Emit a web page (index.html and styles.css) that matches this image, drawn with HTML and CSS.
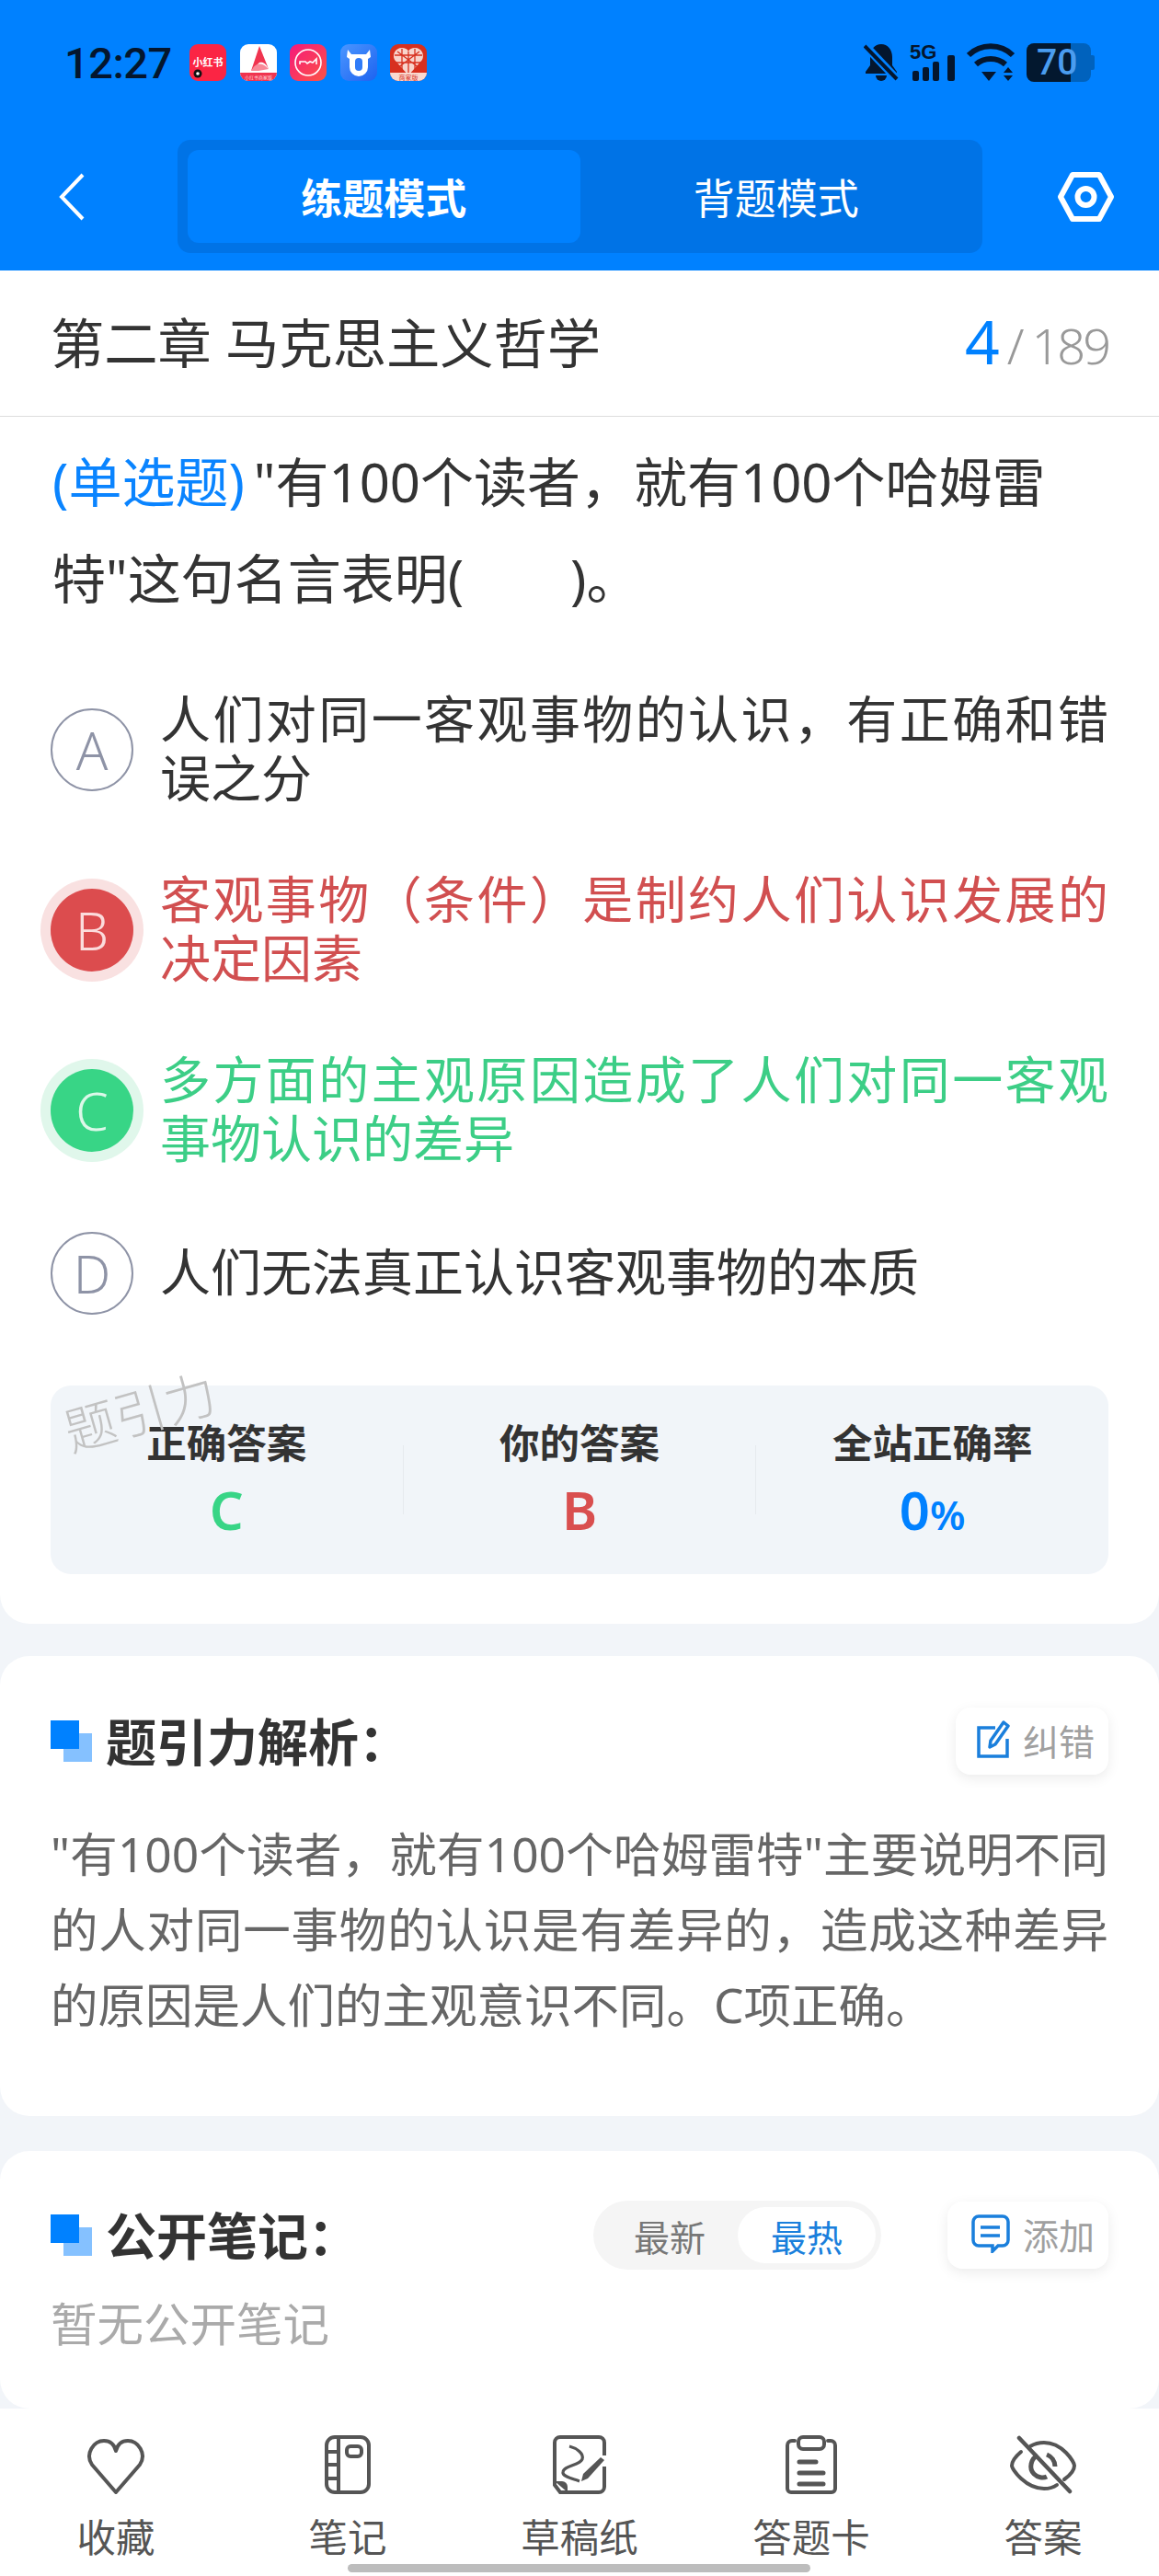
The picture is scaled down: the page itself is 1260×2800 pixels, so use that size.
FILE: index.html
```html
<!DOCTYPE html>
<html lang="zh-CN">
<head>
    <title>题引力</title>
    <meta charset="utf-8">
    <link rel="stylesheet" href="styles.css">
</head>
<body>

    <!-- Blue header -->
    <header class="top">
        <div class="status">
            <span class="time">12:27</span>
            <div class="apps">
                <svg class="app" viewBox="0 0 40 40"><rect width="40" height="40" rx="9" fill="#fb2544"/><text x="20" y="24" font-size="11" font-weight="700" fill="#fff" text-anchor="middle" font-family="Noto Sans CJK SC">小红书</text><circle cx="9" cy="32" r="4.5" fill="#111"/><circle cx="9" cy="32" r="1.8" fill="#fff"/></svg>
                <svg class="app" viewBox="0 0 40 40"><rect width="40" height="40" rx="9" fill="#fff"/><path d="M0 31h40a9 9 0 0 1-9 9H9a9 9 0 0 1-9-9z" fill="#f0344f"/><path d="M21 2l10 25c-3-6-6-8-10-7l-9 9z" fill="#f0344f"/><path d="M12 29c4-8 11-11 19-2l-11 2z" fill="#f88a98"/><text x="20" y="38" font-size="5" fill="#ffd9de" text-anchor="middle" font-family="Noto Sans CJK SC">小红书商家版</text></svg>
                <svg class="app" viewBox="0 0 40 40"><defs><linearGradient id="pink" x1="0" y1="0" x2="1" y2="1"><stop offset="0" stop-color="#f5197c"/><stop offset="1" stop-color="#fc5445"/></linearGradient></defs><rect width="40" height="40" rx="9" fill="url(#pink)"/><circle cx="20" cy="20" r="14" fill="none" stroke="#fff" stroke-width="1.6"/><path d="M11 22v-3h6l2 2 3-2 3 1 4-4v6" fill="none" stroke="#fff" stroke-width="1.6"/></svg>
                <svg class="app" viewBox="0 0 40 40"><defs><linearGradient id="azure" x1="0" y1="0" x2="1" y2="1"><stop offset="0" stop-color="#4b96ff"/><stop offset="1" stop-color="#1d63f0"/></linearGradient></defs><rect width="40" height="40" rx="9" fill="url(#azure)"/><path d="M8 6l4 5h16l4-5 1 8-3 2v9a10 10 0 0 1-20 0v-9l-3-2z" fill="#fff"/><rect x="16" y="15" width="8" height="14" rx="4" fill="#2f7bf8"/></svg>
                <svg class="app" viewBox="0 0 40 40"><rect width="40" height="40" rx="9" fill="#d7301f"/><path d="M20 34L5 17c-3-6 1-13 8-13 3 0 6 1 7 4 1-3 4-4 7-4 7 0 11 7 8 13z" fill="#f8d4cc"/><path d="M13 5v24M27 5v24M5 12h30M6 20h28M20 8v26M8 8l24 18M32 8L8 26" fill="none" stroke="#d7301f" stroke-width="1.3"/><path d="M0 31h40a9 9 0 0 1-9 9H9a9 9 0 0 1-9-9z" fill="#f9d9d0"/><text x="20" y="38.5" font-size="7" fill="#d7301f" text-anchor="middle" font-family="Noto Sans CJK SC">商家版</text></svg>
            </div>
            <div class="sys">
                <svg class="bell" viewBox="0 0 38 42"><path d="M19 1C12 1 7 7 7 15v9l-5 7v2h34v-2l-5-7v-9C31 7 26 1 19 1z" fill="#04162e"/><path d="M13 35h12a6 6 0 0 1-12 0z" fill="#04162e"/><path d="M2 3l34 36" stroke="#0081ff" stroke-width="9"/><path d="M1 3l35 36" stroke="#04162e" stroke-width="4"/></svg>
                <div class="signal">
                    <svg viewBox="0 0 50 42"><rect x="3" y="30" width="7" height="11" rx="2" fill="#04162e"/><rect x="14" y="26" width="7" height="15" rx="2" fill="#04162e"/><rect x="25" y="20" width="7" height="21" rx="2" fill="#04162e"/><rect x="41" y="13" width="8" height="28" rx="2" fill="#04162e"/></svg>
                    <span class="fiveg">5G</span>
                </div>
                <svg class="wifi" viewBox="0 0 53 42"><path d="M2 13C15 0 37 0 50 13" fill="none" stroke="#04162e" stroke-width="6"/><path d="M10 23c9-8 23-8 32 0" fill="none" stroke="#04162e" stroke-width="6"/><path d="M16 31h16l-8 10z" fill="#04162e"/><path d="M40 32h10l-5-6zM40 35h10l-5 6z" fill="#04162e"/></svg>
                <div class="battery">
                    <svg viewBox="0 0 74 42"><path d="M48 0h14a8 8 0 0 1 8 8v26a8 8 0 0 1-8 8H48z" fill="#0062bd"/><path d="M8 0h40v42H8a8 8 0 0 1-8-8V8a8 8 0 0 1 8-8z" fill="#03182f"/><path d="M70 13h2a2 2 0 0 1 2 2v12a2 2 0 0 1-2 2h-2z" fill="#0062bd"/></svg>
                    <span class="level">70</span>
                </div>
            </div>
        </div>
        <nav class="nav">
            <svg class="back" viewBox="0 0 28 52"><path d="M26 2L3 26l23 24" fill="none" stroke="#fff" stroke-width="4"/></svg>
            <div class="modes">
                <div class="mode mode-on">练题模式</div>
                <div class="mode">背题模式</div>
            </div>
            <svg class="gear" viewBox="0 0 61 54"><path d="M16 3h29l13 24-13 24H16L3 27z" fill="none" stroke="#fff" stroke-width="6" stroke-linejoin="round"/><circle cx="30.5" cy="27" r="9" fill="none" stroke="#fff" stroke-width="6"/></svg>
        </nav>
    </header>

    <!-- Question -->
    <section class="card card-question">
        <div class="chapter">
            <h1 class="chapter-name">第二章 马克思主义哲学</h1>
            <div class="count"><b>4</b><span>/</span><span class="total">189</span></div>
        </div>
        <p class="question"><span class="qtype">(单选题)</span>"有100个读者，就有100个哈姆雷特"这句名言表明(&emsp;&emsp;)。</p>
        <div class="options">
            <div class="option">
                <span class="letter">A</span>
                <p>人们对同一客观事物的认识，有正确和错误之分</p>
            </div>
            <div class="option option-wrong">
                <span class="letter">B</span>
                <p>客观事物（条件）是制约人们认识发展的决定因素</p>
            </div>
            <div class="option option-right">
                <span class="letter">C</span>
                <p>多方面的主观原因造成了人们对同一客观事物认识的差异</p>
            </div>
            <div class="option">
                <span class="letter">D</span>
                <p>人们无法真正认识客观事物的本质</p>
            </div>
        </div>
        <div class="stats">
            <span class="watermark">题引力</span>
            <div class="stat"><h3>正确答案</h3><div class="val val-right">C</div></div>
            <i class="sep"></i>
            <div class="stat"><h3>你的答案</h3><div class="val val-wrong">B</div></div>
            <i class="sep"></i>
            <div class="stat"><h3>全站正确率</h3><div class="val val-rate">0<small>%</small></div></div>
        </div>
    </section>

    <!-- Analysis -->
    <section class="card card-analysis">
        <div class="head">
            <i class="mark"></i>
            <h2>题引力解析：</h2>
            <div class="minibtn">
                <svg viewBox="0 0 36 41"><path d="M20 8H2v31h31V20" fill="none" stroke="#1a7fdc" stroke-width="3.5"/><path d="M29 2l5 4-14 20-6 3 1-7z" fill="none" stroke="#1a7fdc" stroke-width="3.5" stroke-linejoin="round"/></svg>
                <span>纠错</span>
            </div>
        </div>
        <p class="analysis">"有100个读者，就有100个哈姆雷特"主要说明不同的人对同一事物的认识是有差异的，造成这种差异的原因是人们的主观意识不同。C项正确。</p>
    </section>

    <!-- Notes -->
    <section class="card card-notes">
        <div class="head">
            <i class="mark"></i>
            <h2>公开笔记：</h2>
            <div class="sort">
                <span>最新</span>
                <span class="sort-on">最热</span>
            </div>
            <div class="minibtn">
                <svg class="icon-add" viewBox="0 0 42 42"><path d="M8 2h26a6 6 0 0 1 6 6v20a6 6 0 0 1-6 6h-5l-6 6v-6H8a6 6 0 0 1-6-6V8a6 6 0 0 1 6-6z" fill="none" stroke="#1a7fdc" stroke-width="3.5"/><path d="M10 14h21M10 23h21" stroke="#1a7fdc" stroke-width="3.5"/></svg>
                <span>添加</span>
            </div>
        </div>
        <p class="empty">暂无公开笔记</p>
    </section>

    <!-- Bottom tabs -->
    <footer class="tabs">
        <div class="tab">
            <svg viewBox="0 0 64 64"><path d="M32 62L6 32C-2 20 8 6 19 6c6 0 11 3 13 11 2-8 7-11 13-11 11 0 21 14 13 26z" fill="none" stroke="#555" stroke-width="4" stroke-linejoin="round"/></svg>
            <span>收藏</span>
        </div>
        <div class="tab">
            <svg viewBox="0 0 64 64"><rect x="9" y="2" width="46" height="60" rx="9" fill="none" stroke="#555" stroke-width="4"/><path d="M22 2v60M9 18h13M9 32h13M9 47h13" fill="none" stroke="#555" stroke-width="4"/><rect x="31" y="12" width="16" height="11" rx="4" fill="none" stroke="#555" stroke-width="4"/></svg>
            <span>笔记</span>
        </div>
        <div class="tab">
            <svg viewBox="0 0 64 64"><path d="M17 62H11L5 54V8a6 6 0 0 1 6-6h42a6 6 0 0 1 6 6v14M59 34v22a6 6 0 0 1-6 6H17" fill="none" stroke="#555" stroke-width="4"/><path d="M5 50h8a6 6 0 0 1 6 6v6z" fill="#555"/><path d="M21 12c8 2 16 8 14 14-3 7-20 7-21 14-1 5 10 7 18 10" fill="none" stroke="#555" stroke-width="3.2"/><path d="M55 24l4 3-18 20-7 3 2-8z" fill="#555"/></svg>
            <span>草稿纸</span>
        </div>
        <div class="tab">
            <svg viewBox="0 0 64 64"><path d="M14 6h-3a5 5 0 0 0-5 5v47a4 4 0 0 0 4 4h44a4 4 0 0 0 4-4V11a5 5 0 0 0-5-5h-3" fill="none" stroke="#555" stroke-width="4" stroke-linecap="round"/><rect x="18" y="2" width="28" height="13" rx="5" fill="none" stroke="#555" stroke-width="4"/><path d="M19 29h18M19 41h26M19 53h26" stroke="#555" stroke-width="5" stroke-linecap="round"/></svg>
            <span>答题卡</span>
        </div>
        <div class="tab">
            <svg class="icon-eye" viewBox="0 0 72 64"><path d="M12 18C5 24 2 29 2 33c0 4 15 25 35 25 5 0 10-1 14-4M22 12c5-3 10-4 15-4 20 0 33 21 33 25 0 4-4 10-11 15" fill="none" stroke="#555" stroke-width="4" stroke-linecap="round"/><path d="M30 22c-7 3-10 14-4 20 4 4 10 5 14 3M40 21c5 2 9 7 9 13" fill="none" stroke="#555" stroke-width="5"/><path d="M10 3l55 58" stroke="#555" stroke-width="4.5" stroke-linecap="round"/></svg>
            <span>答案</span>
        </div>
    </footer>
    <div class="homebar"></div>

</body>
</html>
```

FILE: styles.css
```css
/* page */
*{
    box-sizing: border-box;
}

body{
    position: relative;
    margin: 0;
    width: 1260px;
    height: 2800px;
    overflow: hidden;
    background-color: #f2f5f9;
    color: #333;
    font-family: "Noto Sans", "Noto Sans CJK SC", sans-serif;
}

h1, h2, h3, p{
    margin: 0;
}

/* header */
.top{
    height: 294px;
    background-color: #0081ff;
}

.status{
    display: flex;
    align-items: center;
    height: 136px;
    margin-bottom: 16px;
    padding: 0 70px;
}

.time{
    width: 136px;
    color: #04162e;
    font-family: Roboto, sans-serif;
    font-size: 47px;
    font-weight: 500;
    letter-spacing: -0.5px;
}

.apps{
    display: flex;
    gap: 14.5px;
}

.app{
    display: block;
    width: 40px;
    height: 40px;
}

.sys{
    display: flex;
    align-items: center;
    gap: 12px;
    margin-left: auto;
}

.sys svg{
    display: block;
    height: 42px;
}

.bell{ width: 38px; }
.wifi{ width: 53px; }

.signal, .battery{
    position: relative;
    height: 42px;
}

.signal{ width: 50px; }
.battery{ width: 74px; }

.signal svg{ width: 50px; }
.battery svg{ width: 74px; }

.fiveg{
    position: absolute;
    top: 0;
    left: 0;
    color: #04162e;
    font-family: "Liberation Sans", sans-serif;
    font-size: 22px;
    font-weight: 700;
    line-height: 20px;
}

.level{
    position: absolute;
    top: 0;
    left: 11px;
    color: #4a9df0;
    font-family: Roboto, sans-serif;
    font-size: 39px;
    font-weight: 500;
    line-height: 42px;
}

.nav{
    display: flex;
    align-items: center;
    height: 123px;
    padding-left: 64px;
}

.back{
    width: 28px;
    height: 52px;
}

.modes{
    display: flex;
    width: 875px;
    height: 123px;
    margin-left: 101px;
    padding: 11px;
    border-radius: 14px;
    background-color: #0073e6;
}

.mode{
    display: flex;
    flex: 1;
    align-items: center;
    justify-content: center;
    border-radius: 12px;
    color: #fff;
    font-size: 45px;
}

.mode-on{
    background-color: #0081ff;
    font-weight: 700;
}

.gear{
    width: 61px;
    height: 54px;
    margin-left: 82px;
}

/* cards */
.card{
    background-color: #fff;
}

.card-question{
    height: 1471px;
    border-radius: 0 0 32px 32px;
}

.chapter{
    display: flex;
    align-items: center;
    justify-content: space-between;
    height: 159px;
    padding: 0 55px 0 55px;
    border-bottom: 1px solid #ddd;
}

.chapter-name{
    padding-bottom: 8px;
    font-size: 58.3px;
    font-weight: 400;
}

.count{
    display: flex;
    align-items: baseline;
    padding-bottom: 6px;
    color: #999;
    font-size: 54px;
    font-weight: 300;
}

.count b{
    margin-right: 8px;
    color: #0081ff;
    font-size: 66px;
    font-weight: 400;
}

.total{
    margin-left: 8px;
    letter-spacing: -3px;
}

.question{
    padding: 18px 55px 0 57px;
    font-size: 58px;
    line-height: 105px;
}

.qtype{
    margin-right: 10px;
    color: #0a84ff;
}

.options{
    display: flex;
    flex-direction: column;
    gap: 64px;
    margin-top: 68px;
    padding: 0 55px;
}

.option{
    display: flex;
    align-items: center;
    gap: 29px;
}

.option:last-child{
    margin-top: 2px;
}

.option p{
    flex: 1;
    padding-bottom: 4px;
    font-size: 55px;
    line-height: 64px;
    text-align: justify;
}

.letter{
    display: flex;
    flex: none;
    align-items: center;
    justify-content: center;
    width: 90px;
    height: 90px;
    border: 2px solid #8e93a6;
    border-radius: 50%;
    color: #8e93a6;
    font-size: 57px;
    font-weight: 300;
}

.option-wrong p{
    color: #d14f50;
}

.option-wrong .letter{
    border: none;
    background-color: #dc4c4e;
    box-shadow: 0 0 0 11px #f9e1e1;
    color: #fbdcdc;
}

.option-right p{
    color: #3cce86;
}

.option-right .letter{
    border: none;
    background-color: #38d586;
    box-shadow: 0 0 0 11px #e0f7eb;
    color: #dcf8e9;
}

.stats{
    position: relative;
    display: flex;
    height: 205px;
    margin: 77px 55px 0;
    padding-top: 32px;
    border-radius: 22px;
    background-color: #f1f5f9;
}

.stat{
    flex: 1;
    text-align: center;
}

.stat h3{
    font-size: 43.5px;
    font-weight: 700;
    line-height: 60px;
}

.val{
    font-size: 58px;
    font-weight: 600;
    line-height: 86px;
}

.val small{
    font-size: 44px;
}

.val-right{ color: #38d586; }
.val-wrong{ color: #d94f4f; }
.val-rate{ color: #0081ff; }

.sep{
    width: 1px;
    height: 75px;
    margin-top: 33px;
    background-color: #e6eaee;
}

.watermark{
    position: absolute;
    top: -2px;
    left: 13px;
    color: #c2c2c2;
    font-size: 56px;
    font-weight: 300;
    line-height: 60px;
    transform: rotate(-16deg);
}

.card-analysis{
    height: 500px;
    margin-top: 35px;
    padding: 56px 55px 0;
    border-radius: 32px;
}

.card-notes{
    height: 280px;
    margin-top: 38px;
    padding: 55px 55px 0;
    border-radius: 32px;
}

.head{
    display: flex;
    align-items: center;
    height: 73px;
}

.mark{
    position: relative;
    flex: none;
    width: 45px;
    height: 45px;
    margin-right: 15px;
}

.mark::before, .mark::after{
    content: "";
    position: absolute;
    width: 31px;
    height: 31px;
}

.mark::before{
    bottom: 0;
    right: 0;
    background-color: #85c1ff;
}

.mark::after{
    top: 0;
    left: 0;
    background-color: #0081ff;
}

.head h2{
    flex: 1;
    padding-bottom: 5px;
    font-size: 55px;
    font-weight: 700;
}

.minibtn{
    display: flex;
    align-items: center;
    gap: 14px;
    height: 73px;
    padding: 0 15px 4px 23px;
    border-radius: 16px;
    background-color: #fff;
    box-shadow: 0 4px 14px rgba(0, 0, 0, 0.08);
    color: #a0a0a0;
    font-size: 39px;
}

.minibtn svg{
    width: 36px;
    height: 41px;
}

.minibtn .icon-add{
    width: 42px;
    height: 42px;
}

.card-notes .minibtn{
    padding-left: 26px;
}

.sort{
    display: flex;
    align-items: center;
    justify-content: space-between;
    width: 313px;
    height: 75px;
    margin-right: 72px;
    padding: 0 6px 0 44px;
    border-radius: 38px;
    background-color: #f5f5f5;
    color: #777;
    font-size: 39px;
}

.sort-on{
    display: flex;
    align-items: center;
    justify-content: center;
    width: 150px;
    height: 61px;
    border-radius: 31px;
    background-color: #fff;
    color: #1a7fdc;
}

.analysis{
    margin-top: 45px;
    color: #666;
    font-size: 51.5px;
    line-height: 82px;
    text-align: justify;
}

.empty{
    margin-top: 30px;
    color: #aaa;
    font-size: 50.5px;
    line-height: 60px;
}

/* bottom tabs */
.tabs{
    display: flex;
    height: 182px;
    background-color: #fff;
}

.tab{
    display: flex;
    flex: 1;
    flex-direction: column;
    align-items: center;
    padding-top: 29px;
    color: #555;
    font-size: 42.5px;
    line-height: 50px;
}

.tab svg{
    width: 64px;
    height: 64px;
    margin-bottom: 22px;
}

.tab .icon-eye{
    width: 72px;
}

.homebar{
    position: absolute;
    left: 378px;
    bottom: 4px;
    width: 503px;
    height: 9px;
    border-radius: 5px;
    background-color: #bdbdbd;
}
```
